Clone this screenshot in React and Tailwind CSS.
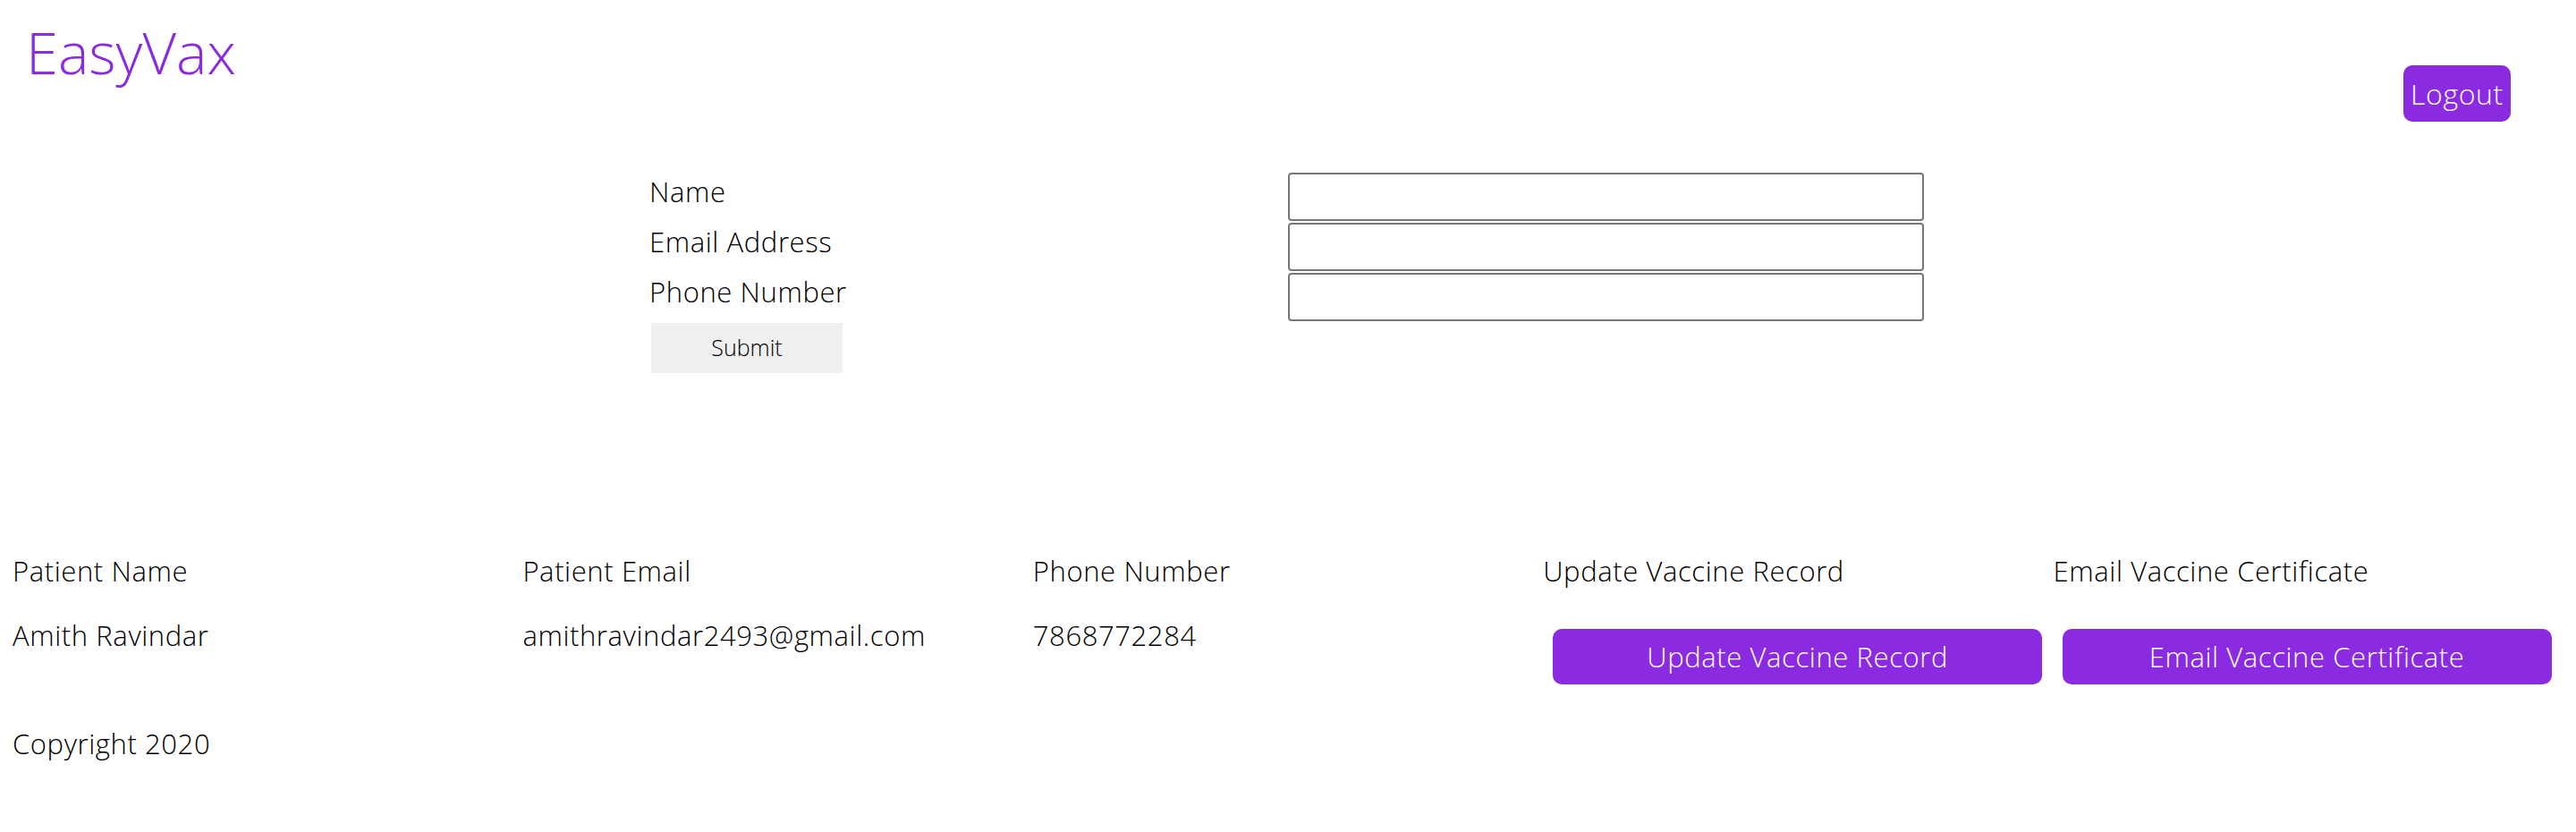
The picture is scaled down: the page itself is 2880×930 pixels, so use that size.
export default function App() {
  const rows = [
    { name: "Amith Ravindar", email: "amithravindar2493@gmail.com", phone: "7868772284" },
  ];

  return (
    <div className="min-h-screen bg-white font-['Open_Sans',sans-serif] font-light text-black">
      {/* header */}
      <header className="flex items-start justify-between">
        <h1 className="ml-[29px] mt-[14px] text-[65px] leading-[88px] font-light text-[#8a2be2]">EasyVax</h1>
        <button className="mt-[73px] mr-[73px] h-[63px] w-[120px] rounded-[10px] bg-[#8a2be2] text-[32px] font-light tracking-[0.6px] text-white">
          Logout
        </button>
      </header>

      {/* patient form */}
      <form className="ml-[726px] mt-[57px] flex flex-col gap-[2px]" onSubmit={e => e.preventDefault()}>
        {["Name", "Email Address", "Phone Number"].map(label => (
          <div key={label} className="flex items-start">
            <label className="w-[714px] pt-[2px] text-[31px] leading-[39px] tracking-[0.6px]">{label}</label>
            <input type="text" className="h-[54px] w-[711px] rounded-[4px] border-2 border-[#767676] bg-white" />
          </div>
        ))}
        <button type="submit" className="ml-[2px] h-[56px] w-[214px] bg-[#efefef] text-[25px] font-light">
          Submit
        </button>
      </form>

      {/* patients table */}
      <div className="mt-[202px] grid grid-cols-5 px-[14px] text-[31px] leading-[39px] tracking-[0.6px]">
        <div>Patient Name</div>
        <div>Patient Email</div>
        <div>Phone Number</div>
        <div>Update Vaccine Record</div>
        <div>Email Vaccine Certificate</div>
        {rows.map(r => (
          <div key={r.email} className="contents">
            <div className="mt-[33px]">{r.name}</div>
            <div className="mt-[33px]">{r.email}</div>
            <div className="mt-[33px]">{r.phone}</div>
            <div className="mt-[45px]">
              <button className="ml-[11px] h-[62px] w-[547px] rounded-[10px] bg-[#8a2be2] text-[31px] font-light tracking-[0.6px] text-white">
                Update Vaccine Record
              </button>
            </div>
            <div className="mt-[45px]">
              <button className="ml-[10px] h-[62px] w-[547px] rounded-[10px] bg-[#8a2be2] text-[31px] font-light tracking-[0.6px] text-white">
                Email Vaccine Certificate
              </button>
            </div>
          </div>
        ))}
      </div>

      <footer className="ml-[14px] mt-[47px] text-[31px] leading-[39px] tracking-[0.6px]">Copyright 2020</footer>
    </div>
  );
}
